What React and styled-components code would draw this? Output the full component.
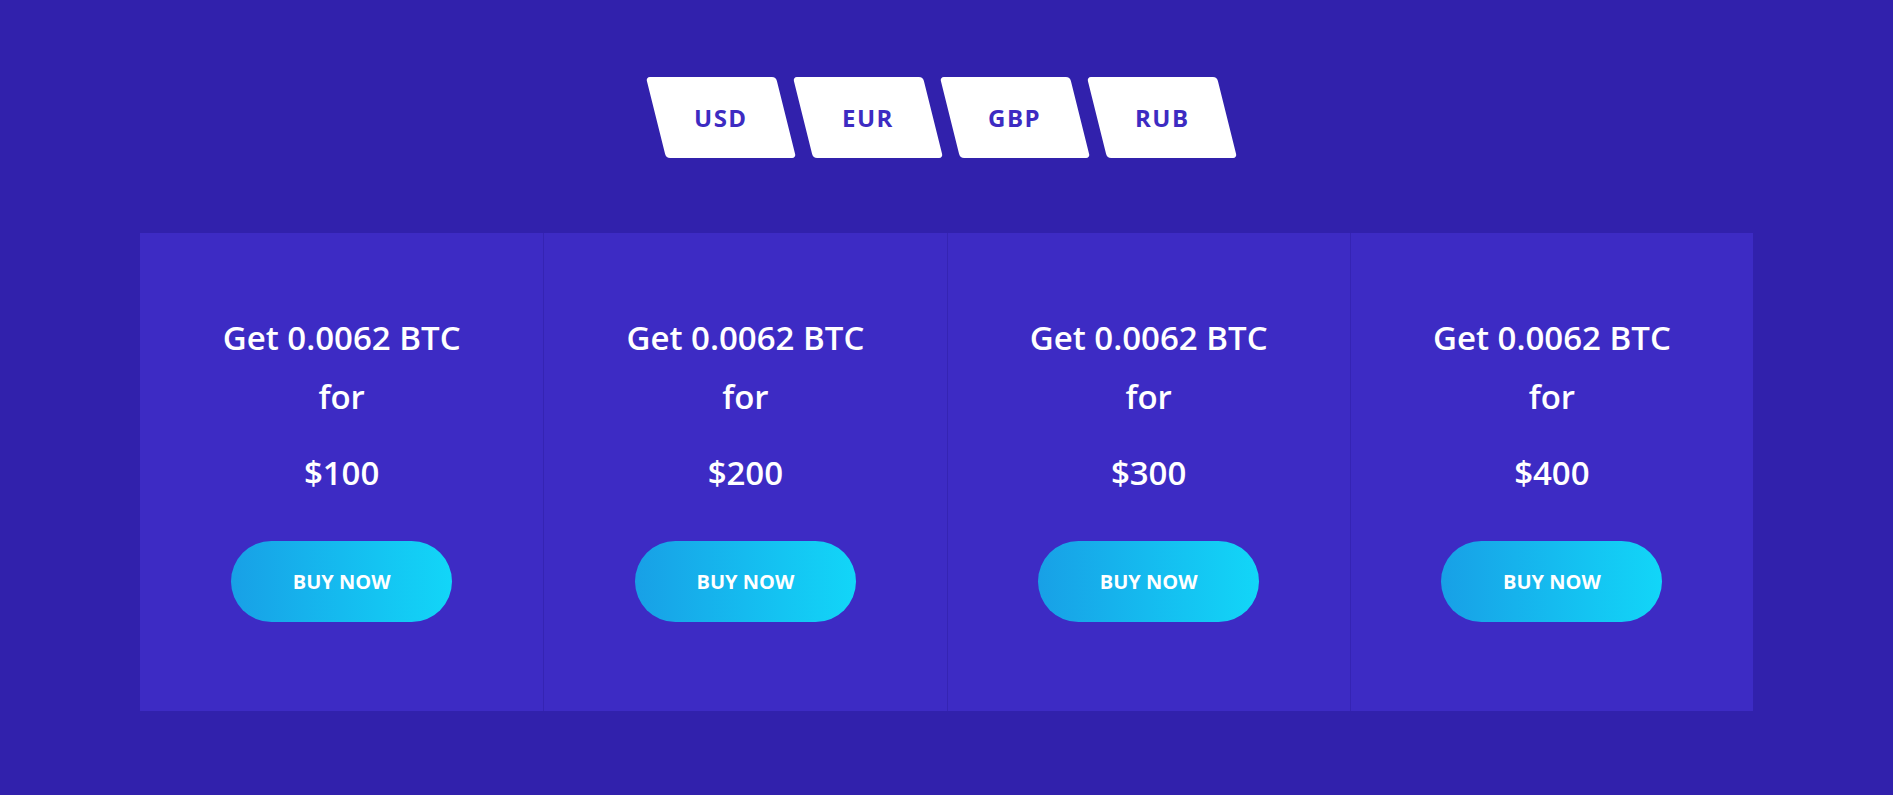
import React, { useState } from "react";
import styled, { createGlobalStyle } from "styled-components";

const GlobalStyle = createGlobalStyle`
    * {
        box-sizing: border-box;
    }

    body {
        margin: 0;
        background-color: #3121ac;
        font-family: "Open Sans", "Noto Sans", sans-serif;
    }
`;

const currencies = ["USD", "EUR", "GBP", "RUB"];

const plans = [
    { btc: "0.0062", price: "$100" },
    { btc: "0.0062", price: "$200" },
    { btc: "0.0062", price: "$300" },
    { btc: "0.0062", price: "$400" },
];

const App = () => {
    const [active, setActive] = useState("USD");

    return (
        <>
            <GlobalStyle />
            <Page>
                <Tabs>
                    {currencies.map((c) => (
                        <Tab key={c} $active={c === active} onClick={() => setActive(c)}>
                            <span>{c}</span>
                        </Tab>
                    ))}
                </Tabs>

                <Plans>
                    {plans.map((p) => (
                        <Plan key={p.price}>
                            <Title>
                                Get {p.btc} BTC
                                <br />
                                for
                            </Title>
                            <Price>{p.price}</Price>
                            <BuyButton>BUY NOW</BuyButton>
                        </Plan>
                    ))}
                </Plans>
            </Page>
        </>
    );
};

export default App;

const Page = styled.div`
    min-height: 795px;
    padding-top: 77px;
    display: flex;
    flex-direction: column;
    align-items: center;
`;

const Tabs = styled.div`
    display: flex;
    gap: 17px;
    margin-bottom: 75px;
    margin-right: 10px;
`;

const Tab = styled.button`
    width: 130px;
    height: 81px;
    border: none;
    border-radius: 4px;
    background-color: #ffffff;
    transform: skewX(14deg);
    cursor: pointer;
    padding: 0;

    display: flex;
    align-items: center;
    justify-content: center;

    span {
        display: block;
        transform: skewX(-14deg);
        font-family: "Open Sans", "Noto Sans", sans-serif;
        font-size: 24px;
        font-weight: 700;
        letter-spacing: 1.5px;
        color: #3d2bc2;
    }
`;

const Plans = styled.div`
    width: 1613px;
    display: grid;
    grid-template-columns: repeat(4, 1fr);
    background-color: #3d2bc4;
`;

const Plan = styled.div`
    padding: 75px 20px 89px;
    display: flex;
    flex-direction: column;
    align-items: center;
    text-align: center;
    color: #ffffff;

    & + & {
        border-left: 1px solid #3524b3;
    }
`;

const Title = styled.h3`
    margin: 0;
    font-size: 33px;
    font-weight: 600;
    line-height: 59px;
`;

const Price = styled.div`
    margin-top: 28px;
    font-size: 33px;
    font-weight: 600;
    line-height: 38px;
`;

const BuyButton = styled.button`
    margin-top: 49px;
    width: 221px;
    height: 81px;
    border: none;
    border-radius: 41px;
    background: linear-gradient(to right, #18a0e6, #12d6f8);
    color: #ffffff;
    font-family: "Open Sans", "Noto Sans", sans-serif;
    font-size: 20px;
    font-weight: 700;
    cursor: pointer;
`;
